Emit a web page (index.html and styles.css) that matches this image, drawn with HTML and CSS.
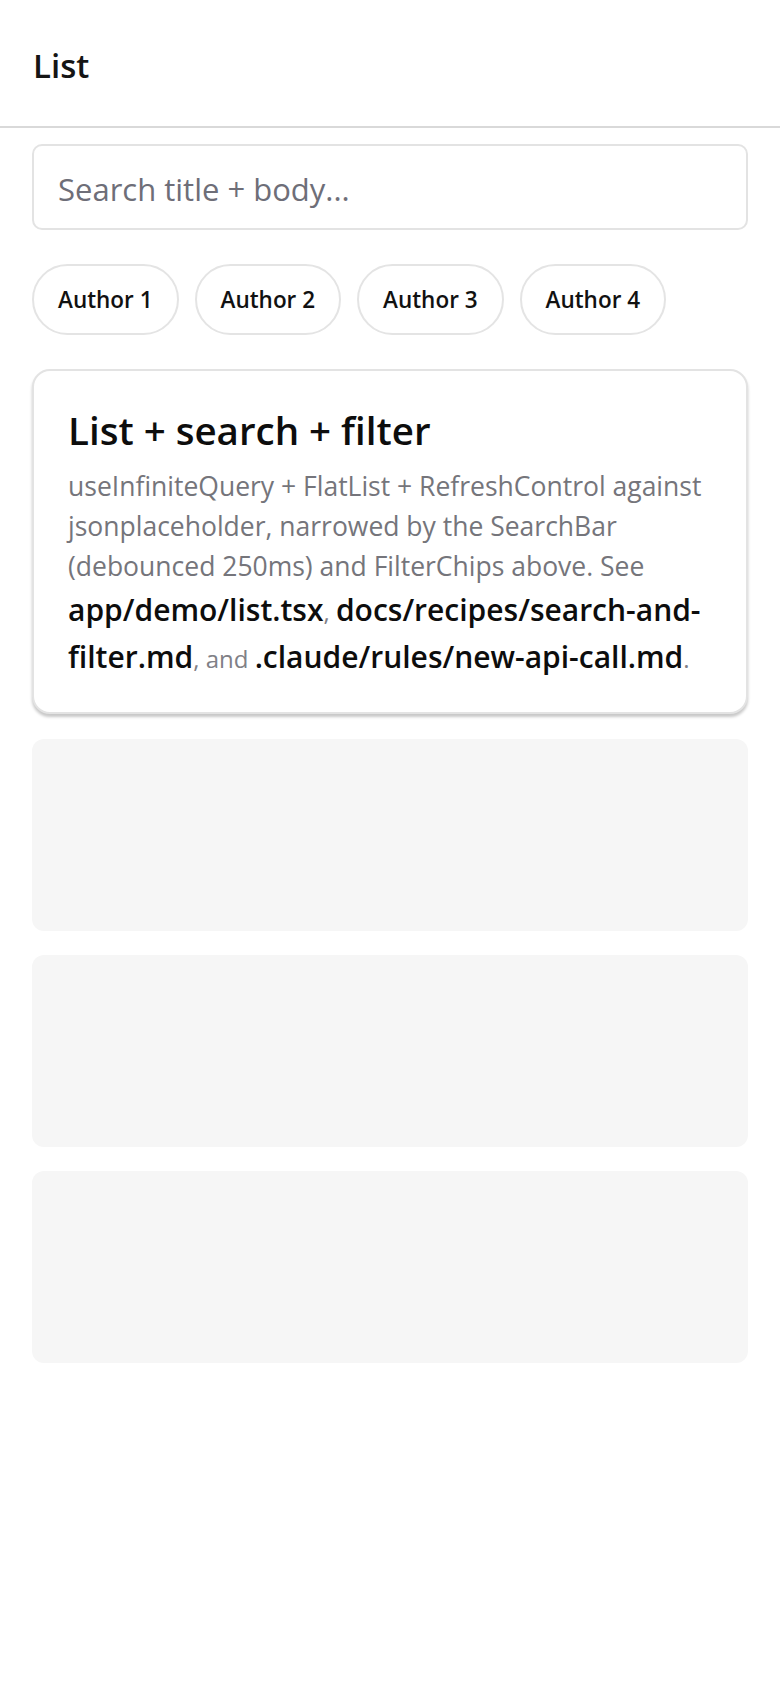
FILE: index.html
```html
<!DOCTYPE html>
<html lang="en">
<head>
<meta charset="utf-8">
<title>List</title>
<link rel="stylesheet" href="styles.css">
</head>
<body>
<header class="topbar">
  <h1 class="topbar-title">List</h1>
</header>
<main class="content">
  <div class="search">
    <input class="search-input" type="text" placeholder="Search title + body...">
  </div>
  <div class="chips">
    <button class="chip">Author 1</button>
    <button class="chip">Author 2</button>
    <button class="chip">Author 3</button>
    <button class="chip">Author 4</button>
  </div>
  <section class="card">
    <h2 class="card-title">List + search + filter</h2>
    <p class="card-body">useInfiniteQuery + FlatList + RefreshControl against jsonplaceholder, narrowed by the SearchBar (debounced 250ms) and FilterChips above. See <span class="code">app/demo/list.tsx</span><span class="sep">, </span><span class="code">docs/recipes/search-and-filter.md</span><span class="sep">, and </span><span class="code">.claude/rules/new-api-call.md</span><span class="sep">.</span></p>
  </section>
  <div class="skeleton"></div>
  <div class="skeleton"></div>
  <div class="skeleton"></div>
</main>
</body>
</html>
```
FILE: styles.css
```css
* { box-sizing: border-box; }
html, body {
  margin: 0;
  padding: 0;
  background: #ffffff;
}
body {
  font-family: "Open Sans", "Noto Sans", sans-serif;
  color: #111111;
}
.topbar {
  height: 128px;
  border-bottom: 2px solid #d9d9d9;
  display: flex;
  align-items: center;
  padding-left: 33px;
}
.topbar-title {
  margin: 0;
  font-size: 33px;
  font-weight: 600;
  color: #151515;
  position: relative;
  top: 2px;
}
.content {
  padding: 16px 32px;
  display: flex;
  flex-direction: column;
}
.search-input {
  width: 100%;
  height: 86px;
  border: 2px solid #e3e3e3;
  border-radius: 10px;
  padding: 4px 24px 0;
  font-family: inherit;
  font-size: 31px;
  color: #111;
  outline: none;
  background: #fff;
}
.search-input::placeholder { color: #6e6e78; }
.chips {
  display: flex;
  gap: 16px;
  margin-top: 34px;
}
.chip {
  height: 71px;
  padding: 0 24px;
  border: 2px solid #e4e4e4;
  border-radius: 36px;
  background: #fff;
  font-family: inherit;
  font-size: 22.5px;
  font-weight: 600;
  color: #111;
}
.card {
  margin-top: 34px;
  border: 2px solid #e3e3e3;
  border-radius: 18px;
  padding: 33px 34px 32px;
  box-shadow: 0 3px 3px rgba(0, 0, 0, 0.22);
  background: #fff;
}
.card-title {
  margin: 0 0 10px;
  font-size: 38.5px;
  line-height: 52px;
  font-weight: 600;
  color: #0d0d0d;
}
.card-body {
  margin: 0;
  font-size: 26.5px;
  line-height: 40px;
  color: #75757b;
}
.code {
  font-size: 30px;
  line-height: 47px;
  font-weight: 600;
  color: #0d0d0d;
}
.sep {
  font-size: 24px;
  color: #808086;
}
.skeleton {
  height: 192px;
  margin-top: 24px;
  border-radius: 12px;
  background: #f6f6f6;
}
.card + .skeleton { margin-top: 25px; }
```
